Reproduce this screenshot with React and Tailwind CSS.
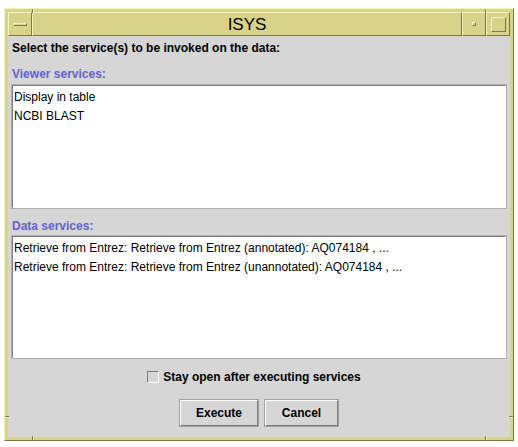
export default function App() {
  const font = { fontFamily: '"Liberation Sans", Arial, sans-serif' };
  return (
    <div className="w-[518px] h-[447px] bg-white pt-[8px] pl-[4px]" style={font}>
      <div className="relative w-[510px] h-[433px] bg-[#d7d48a] border border-t-[#f3f1c4] border-l-[#f3f1c4] border-b-[#7d7a3c] border-r-[#7d7a3c] p-[3px] flex flex-col">
        {/* resize notches */}
        <div className="absolute top-0 left-[27px] w-[1px] h-[4px] bg-[#7d7a3c]" />
        <div className="absolute top-0 left-[28px] w-[1px] h-[4px] bg-[#f3f1c4]" />
        <div className="absolute top-0 right-[27px] w-[1px] h-[4px] bg-[#7d7a3c]" />
        <div className="absolute top-0 right-[26px] w-[1px] h-[4px] bg-[#f3f1c4]" />
        <div className="absolute bottom-0 left-[27px] w-[1px] h-[4px] bg-[#7d7a3c]" />
        <div className="absolute bottom-0 left-[28px] w-[1px] h-[4px] bg-[#f3f1c4]" />
        <div className="absolute bottom-0 right-[27px] w-[1px] h-[4px] bg-[#7d7a3c]" />
        <div className="absolute bottom-0 right-[26px] w-[1px] h-[4px] bg-[#f3f1c4]" />
        <div className="absolute left-0 bottom-[23px] h-[1px] w-[4px] bg-[#7d7a3c]" />
        <div className="absolute left-0 bottom-[22px] h-[1px] w-[4px] bg-[#f3f1c4]" />
        <div className="absolute right-0 bottom-[23px] h-[1px] w-[4px] bg-[#7d7a3c]" />
        <div className="absolute right-0 bottom-[22px] h-[1px] w-[4px] bg-[#f3f1c4]" />

        {/* title bar */}
        <div className="flex h-[24px] shrink-0">
          <div className="w-[24px] h-[24px] border border-t-[#f3f1c4] border-l-[#f3f1c4] border-b-[#7d7a3c] border-r-[#7d7a3c] flex items-center justify-center">
            <div className="w-[14px] h-[3px] border border-t-[#f3f1c4] border-l-[#f3f1c4] border-b-[#7d7a3c] border-r-[#7d7a3c]" />
          </div>
          <div className="flex-1 h-[24px] border border-t-[#f3f1c4] border-l-[#f3f1c4] border-b-[#7d7a3c] border-r-[#7d7a3c] flex items-center justify-center text-[17px] text-black leading-none">
            ISYS
          </div>
          <div className="w-[24px] h-[24px] border border-t-[#f3f1c4] border-l-[#f3f1c4] border-b-[#7d7a3c] border-r-[#7d7a3c] flex items-center justify-center">
            <div className="w-[4px] h-[4px] border border-t-[#f3f1c4] border-l-[#f3f1c4] border-b-[#7d7a3c] border-r-[#7d7a3c]" />
          </div>
          <div className="w-[24px] h-[24px] border border-t-[#f3f1c4] border-l-[#f3f1c4] border-b-[#7d7a3c] border-r-[#7d7a3c] flex items-center justify-center">
            <div className="w-[15px] h-[15px] border border-t-[#f3f1c4] border-l-[#f3f1c4] border-b-[#7d7a3c] border-r-[#7d7a3c]" />
          </div>
        </div>

        {/* content */}
        <div className="flex-1 bg-[#d6d6d6] flex flex-col px-[4px] text-[12px] text-black">
          <div className="font-bold h-[22px] flex items-center mt-[1px]">Select the service(s) to be invoked on the data:</div>
          <div className="font-bold text-[#6363c8] h-[22px] flex items-end pb-[2px] mt-[4px]">Viewer services:</div>
          <div className="h-[123px] bg-white border border-t-[#7e7e7e] border-l-[#7e7e7e] border-b-[#ffffff] border-r-[#ffffff] outline outline-1 outline-[#b0b0b0] pl-[1px] pt-[1px]">
            <div className="h-[19px] flex items-center">Display in table</div>
            <div className="h-[19px] flex items-center">NCBI BLAST</div>
          </div>
          <div className="font-bold text-[#6363c8] h-[22px] flex items-end pb-[1px] mt-[6px]">Data services:</div>
          <div className="h-[122px] bg-white border border-t-[#7e7e7e] border-l-[#7e7e7e] border-b-[#ffffff] border-r-[#ffffff] outline outline-1 outline-[#b0b0b0] pl-[1px] pt-[1px]">
            <div className="h-[19px] flex items-center">Retrieve from Entrez: Retrieve from Entrez (annotated): AQ074184 , ...</div>
            <div className="h-[19px] flex items-center">Retrieve from Entrez: Retrieve from Entrez (unannotated): AQ074184 , ...</div>
          </div>
          <div className="flex items-center justify-center mt-[12px] h-[14px] pr-[10px]">
            <div className="w-[12px] h-[12px] border border-t-[#7e7e7e] border-l-[#7e7e7e] border-b-white border-r-white bg-[#d6d6d6] mr-[4px]" />
            <span className="font-bold">Stay open after executing services</span>
          </div>
          <div className="flex justify-center gap-[7px] mt-[16px]">
            <div className="w-[78px] h-[26px] border border-t-white border-l-white border-b-[#7e7e7e] border-r-[#7e7e7e] outline outline-1 outline-[#a0a0a0] flex items-center justify-center font-bold">Execute</div>
            <div className="w-[73px] h-[26px] border border-t-white border-l-white border-b-[#7e7e7e] border-r-[#7e7e7e] outline outline-1 outline-[#a0a0a0] flex items-center justify-center font-bold">Cancel</div>
          </div>
        </div>
      </div>
    </div>
  );
}
